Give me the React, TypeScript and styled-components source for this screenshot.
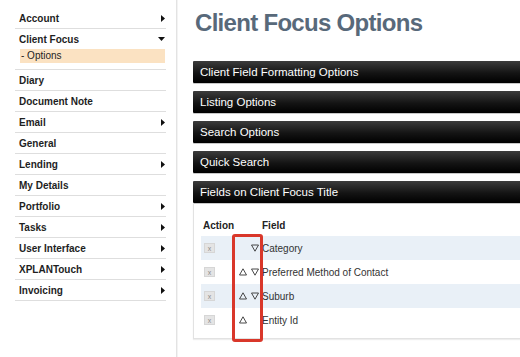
import styled, { createGlobalStyle } from 'styled-components';

const GlobalStyle = createGlobalStyle`
  html, body {
    margin: 0;
    padding: 0;
    background: #fff;
    font-family: 'Liberation Sans', Arial, sans-serif;
    overflow: hidden;
  }
`;

const Page = styled.div`
  display: flex;
  width: 520px;
  height: 357px;
  overflow: hidden;
`;

const Sidebar = styled.nav`
  flex: 0 0 176px;
  padding-top: 8px;
  border-right: 1px solid #e3e3e3;
  box-shadow: 1px 0 0 #f3f3f3;
`;

const Menu = styled.ul`
  list-style: none;
  margin: 0 0 0 15px;
  padding: 0;
  width: 151px;
`;

const MenuItem = styled.li`
  border-bottom: 1px solid #dedede;
`;

const MenuRow = styled.div`
  display: flex;
  align-items: center;
  justify-content: space-between;
  height: 20px;
  padding: 0 1px 0 4px;
  font-size: 10px;
  font-weight: bold;
  color: #1e1e1e;
`;

const SubMenu = styled.div`
  padding: 0 1px 6px 5px;
`;

const SubItem = styled.div<{ $active?: boolean }>`
  height: 14px;
  line-height: 14px;
  padding-left: 1px;
  font-size: 10px;
  color: #222;
  background: ${({ $active }) => ($active ? '#fbe2c2' : 'transparent')};
`;

const Main = styled.main`
  flex: 1;
  overflow: hidden;
  padding-left: 16px;
`;

const Title = styled.h1`
  margin: 9px 0 0 2px;
  height: 52px;
  font-size: 24px;
  line-height: 28px;
  font-weight: bold;
  letter-spacing: -0.7px;
  color: #58697a;
`;

const Sections = styled.div`
  display: flex;
  flex-direction: column;
  gap: 8px;
  width: 380px;
`;

const Bar = styled.div`
  height: 22px;
  line-height: 22px;
  padding-left: 7px;
  font-size: 11.5px;
  color: #fff;
  background: linear-gradient(#3c3c3c, #141414 55%, #000);
  border-radius: 1px;
  box-shadow: 0 1px 0 #c8c8c8;
`;

const Panel = styled.div`
  position: relative;
`;

const PanelBody = styled.div`
  border: 1px solid #e2e2e2;
  border-top: none;
  padding: 11px 0 6px 7px;
  box-shadow: 0 1px 1px #eee;
`;

const HeaderRow = styled.div`
  display: flex;
  align-items: center;
  height: 22px;
  font-size: 10px;
  font-weight: bold;
  color: #222;
`;

const ActionHead = styled.div`
  width: 59px;
  padding-left: 2px;
`;

const FieldRow = styled.div<{ $shaded: boolean }>`
  display: flex;
  align-items: center;
  height: 24px;
  padding-left: 3px;
  background: ${({ $shaded }) => ($shaded ? '#e9f0f7' : '#fff')};
  font-size: 10px;
  color: #333;
`;

const RemoveButton = styled.span`
  display: flex;
  align-items: center;
  justify-content: center;
  width: 11px;
  height: 10px;
  background: #e4e4e4;
  border: 1px solid #d6d6d6;
  box-sizing: border-box;
  font-size: 7px;
  line-height: 7px;
  color: #8c8c8c;
`;

const Arrows = styled.div`
  display: flex;
  gap: 4px;
  margin-left: 24px;
  margin-right: 3px;
`;

const ArrowSlot = styled.span`
  display: flex;
  width: 8px;
  height: 8px;
`;

const Annotation = styled.div`
  position: absolute;
  left: 39px;
  top: 53px;
  width: 31px;
  height: 108px;
  box-sizing: border-box;
  border: 3px solid #d9372a;
  border-radius: 3px;
`;

function Caret({ dir }: { dir: 'right' | 'down' }) {
  return dir === 'right' ? (
    <svg width="4" height="7" viewBox="0 0 4 7">
      <path d="M0 0 L4 3.5 L0 7 Z" fill="#111" />
    </svg>
  ) : (
    <svg width="7" height="4" viewBox="0 0 7 4">
      <path d="M0 0 L7 0 L3.5 4 Z" fill="#111" />
    </svg>
  );
}

function Triangle({ dir }: { dir: 'up' | 'down' }) {
  const d = dir === 'up' ? 'M4 0.8 L7.5 7 L0.5 7 Z' : 'M0.5 1 L7.5 1 L4 7.2 Z';
  return (
    <svg width="8" height="8" viewBox="0 0 8 8">
      <path d={d} fill="none" stroke="#333" strokeWidth="0.9" />
    </svg>
  );
}

const menu: { label: string; caret?: 'right' | 'down'; sub?: string[] }[] = [
  { label: 'Account', caret: 'right' },
  { label: 'Client Focus', caret: 'down', sub: ['- Options'] },
  { label: 'Diary' },
  { label: 'Document Note' },
  { label: 'Email', caret: 'right' },
  { label: 'General' },
  { label: 'Lending', caret: 'right' },
  { label: 'My Details' },
  { label: 'Portfolio', caret: 'right' },
  { label: 'Tasks', caret: 'right' },
  { label: 'User Interface', caret: 'right' },
  { label: 'XPLANTouch', caret: 'right' },
  { label: 'Invoicing', caret: 'right' },
];

const sections = [
  'Client Field Formatting Options',
  'Listing Options',
  'Search Options',
  'Quick Search',
];

const fields = ['Category', 'Preferred Method of Contact', 'Suburb', 'Entity Id'];

export default function App() {
  return (
    <>
      <GlobalStyle />
      <Page>
        <Sidebar>
          <Menu>
            {menu.map((item) => (
              <MenuItem key={item.label}>
                <MenuRow>
                  <span>{item.label}</span>
                  {item.caret && <Caret dir={item.caret} />}
                </MenuRow>
                {item.sub && (
                  <SubMenu>
                    {item.sub.map((s) => (
                      <SubItem key={s} $active>
                        {s}
                      </SubItem>
                    ))}
                  </SubMenu>
                )}
              </MenuItem>
            ))}
          </Menu>
        </Sidebar>
        <Main>
          <Title>Client Focus Options</Title>
          <Sections>
            {sections.map((s) => (
              <Bar key={s}>{s}</Bar>
            ))}
            <Panel>
              <Bar>Fields on Client Focus Title</Bar>
              <PanelBody>
                <HeaderRow>
                  <ActionHead>Action</ActionHead>
                  <span>Field</span>
                </HeaderRow>
                {fields.map((f, i) => (
                  <FieldRow key={f} $shaded={i % 2 === 0}>
                    <RemoveButton>x</RemoveButton>
                    <Arrows>
                      <ArrowSlot>{i > 0 && <Triangle dir="up" />}</ArrowSlot>
                      <ArrowSlot>{i < fields.length - 1 && <Triangle dir="down" />}</ArrowSlot>
                    </Arrows>
                    <span>{f}</span>
                  </FieldRow>
                ))}
              </PanelBody>
              <Annotation />
            </Panel>
          </Sections>
        </Main>
      </Page>
    </>
  );
}
